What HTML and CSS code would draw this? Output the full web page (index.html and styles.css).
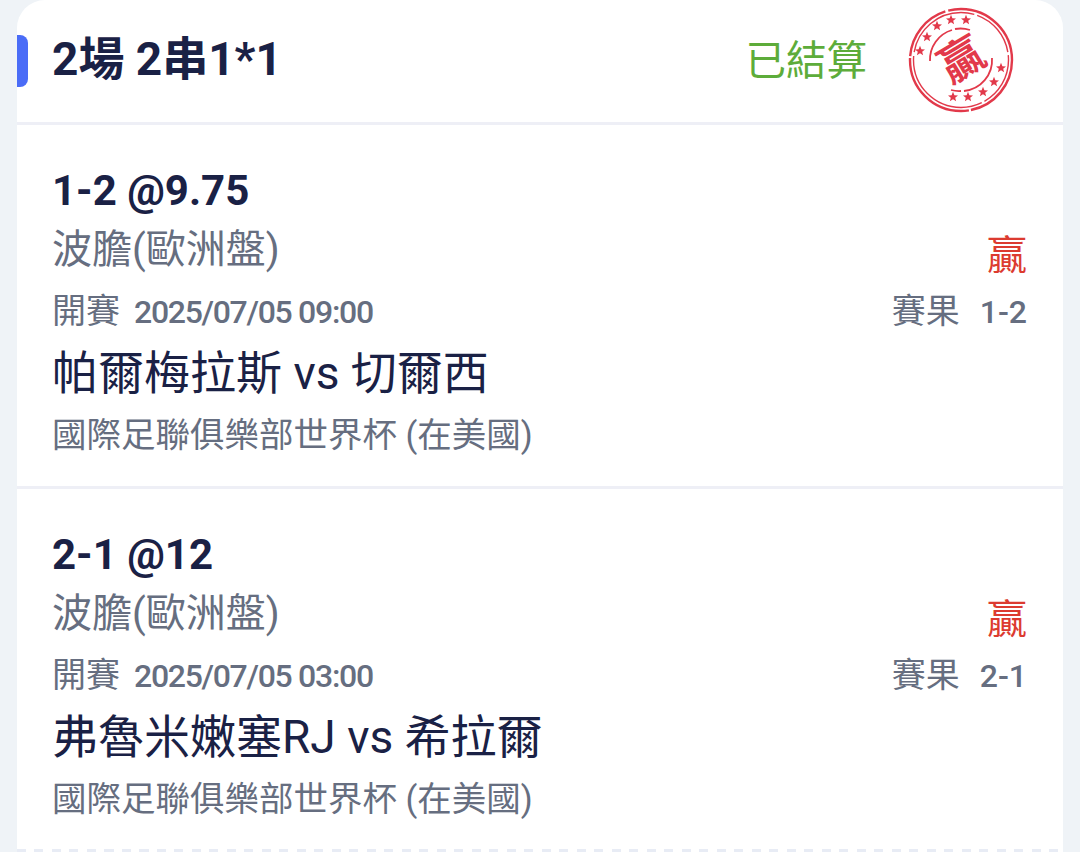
FILE: index.html
```html
<!DOCTYPE html>
<html lang="zh-Hant">
<head>
    <meta charset="UTF-8">
    <title>注單</title>
    <link rel="stylesheet" href="styles.css">
</head>
<body>
    <div class="card">
        <div class="head">
            <span class="mark"></span>
            <div class="head-title">2場 2串1*1</div>
            <div class="status">已結算</div>
            <svg class="stamp" width="106" height="108" viewBox="0 0 106 108">
                <defs>
                    <polygon id="star" points="0,-5.2 1.4,-1.7 5,-1.6 2.2,.7 3.1,4.2 0,2.2 -3.1,4.2 -2.2,.7 -5,-1.6 -1.4,-1.7"/>
                </defs>
                <g fill="none" stroke="#e2394a">
                    <circle cx="53" cy="54" r="51" stroke-width="2.4" stroke-dasharray="70 2 90 2 60 3 110 2"/>
                    <circle cx="53" cy="54" r="47.5" stroke-width="1.4" stroke-dasharray="50 3 100 4 80 3"/>
                    <path d="M22 55 A31 31 0 0 1 44 24 M47 23 A31 31 0 0 1 62 24" stroke-width="1.8"/>
                    <path d="M84 52 A31 31 0 0 1 56 85 M53 85 A31 31 0 0 1 43 84" stroke-width="1.8"/>
                </g>
                <text class="stamp-text" x="54" y="69" transform="rotate(-31 54 54)">贏</text>
                <g fill="#e2394a">
                    <use href="#star" x="12" y="45"/>
                    <use href="#star" x="19" y="31"/>
                    <use href="#star" x="29" y="20"/>
                    <use href="#star" x="43" y="14"/>
                    <use href="#star" x="58" y="14"/>
                    <use href="#star" x="93" y="62"/>
                    <use href="#star" x="86" y="76"/>
                    <use href="#star" x="75" y="86"/>
                    <use href="#star" x="60" y="91"/>
                    <use href="#star" x="45" y="91"/>
                </g>
            </svg>
        </div>

        <div class="leg">
            <div class="pick">1-2 @9.75</div>
            <div class="line market-line">
                <span class="market">波膽(歐洲盤)</span>
                <span class="win">贏</span>
            </div>
            <div class="line time-line">
                <span class="kick"><span class="label">開賽</span>2025/07/05 09:00</span>
                <span class="result"><span class="label">賽果</span>1-2</span>
            </div>
            <div class="teams">帕爾梅拉斯 vs 切爾西</div>
            <div class="league">國際足聯俱樂部世界杯 (在美國)</div>
        </div>

        <div class="leg">
            <div class="pick">2-1 @12</div>
            <div class="line market-line">
                <span class="market">波膽(歐洲盤)</span>
                <span class="win">贏</span>
            </div>
            <div class="line time-line">
                <span class="kick"><span class="label">開賽</span>2025/07/05 03:00</span>
                <span class="result"><span class="label">賽果</span>2-1</span>
            </div>
            <div class="teams">弗魯米嫩塞RJ vs 希拉爾</div>
            <div class="league">國際足聯俱樂部世界杯 (在美國)</div>
        </div>
        <div class="dashes"></div>
    </div>
</body>
</html>
```
FILE: styles.css
```css
html, body {
    margin: 0;
    height: 852px;
    overflow: hidden;
}
body {
    background-color: #eff3f7;
    font-family: Roboto, "Noto Sans CJK TC", sans-serif;
    padding: 0 17px;
}
.card {
    background-color: white;
    border-radius: 28px 28px 0 0;
    height: 852px;
    overflow: hidden;
}
.head {
    display: flex;
    align-items: center;
    height: 122px;
    border-bottom: 3px solid #eeeff6;
    padding-right: 49px;
}
.mark {
    width: 11px;
    height: 52px;
    background-color: #4a6cf7;
    border-radius: 0 8px 8px 0;
    margin-right: 24px;
}
.head-title {
    flex: 1;
    font-size: 46px;
    line-height: 60px;
    font-weight: 700;
    color: #1a2145;
    padding-bottom: 4px;
}
.status {
    font-size: 40.5px;
    line-height: 60px;
    color: #5dac3a;
    margin-right: 41px;
}
.stamp {
    margin-bottom: 2px;
}
.stamp-text {
    font-family: "Noto Sans CJK TC", sans-serif;
    font-size: 44px;
    font-weight: 700;
    fill: #e2394a;
    text-anchor: middle;
}
.leg {
    height: 364px;
    box-sizing: border-box;
    padding: 41px 36px 0 35px;
    border-bottom: 3px solid #eeeff6;
}
.leg + .leg {
    height: 360px;
    border-bottom: none;
}
.pick {
    font-size: 42px;
    line-height: 50px;
    font-weight: 700;
    color: #1a2145;
}
.line {
    display: flex;
    justify-content: space-between;
    color: #666e80;
}
.market-line {
    height: 56px;
    margin-top: 6px;
    align-items: flex-end;
}
.market {
    font-size: 40px;
    line-height: 56px;
}
.win {
    font-size: 40px;
    line-height: 44px;
    color: #dc3b30;
}
.time-line {
    height: 60px;
    align-items: center;
    font-size: 32px;
    font-weight: 500;
    letter-spacing: -1.3px;
}
.label {
    font-size: 34px;
    font-weight: 400;
    letter-spacing: 0;
    margin-right: 14px;
}
.result {
    letter-spacing: 0;
}
.result .label {
    margin-right: 20px;
}
.teams {
    font-size: 46px;
    line-height: 70px;
    color: #1a2145;
}
.league {
    font-size: 34.5px;
    line-height: 54px;
    color: #666e80;
}
.dashes {
    height: 3px;
    background-image: repeating-linear-gradient(90deg, #e8ecf5 0 9px, transparent 9px 17.5px);
}
```
